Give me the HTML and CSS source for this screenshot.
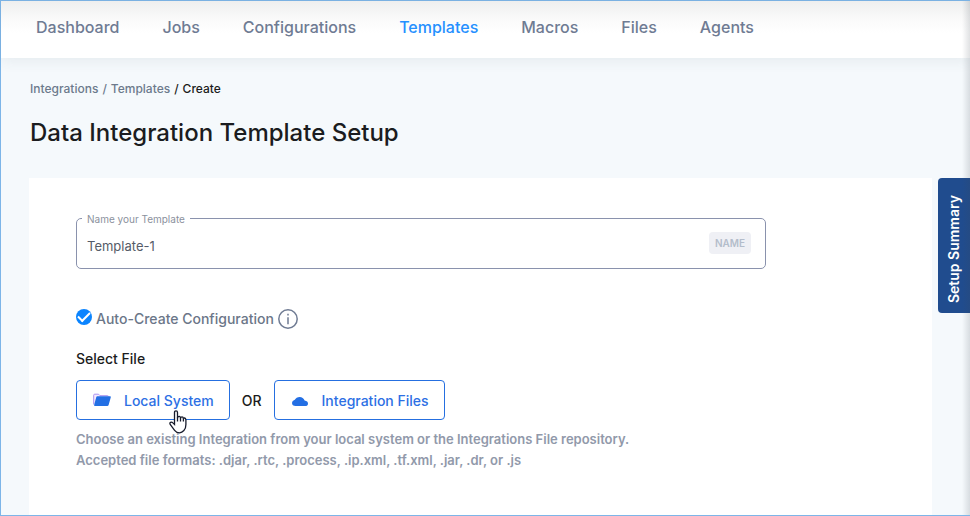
FILE: index.html
```html
<!DOCTYPE html>
<html lang="en">
<head>
<meta charset="utf-8">
<meta name="viewport" content="width=device-width, initial-scale=1">
<title>Data Integration Template Setup</title>
<link rel="stylesheet" href="styles.css">
</head>
<body>
<div class="page">
  <nav class="topnav" aria-label="Main">
    <a href="#">Dashboard</a>
    <a href="#">Jobs</a>
    <a href="#">Configurations</a>
    <a href="#" class="active">Templates</a>
    <a href="#">Macros</a>
    <a href="#">Files</a>
    <a href="#">Agents</a>
  </nav>
  <header class="heading">
    <div class="crumbs"><a href="#">Integrations</a><span class="slash">/</span><a href="#">Templates</a><span>/</span><span>Create</span></div>
    <h1>Data Integration Template Setup</h1>
  </header>
  <div class="content">
    <main class="card">
      <div class="field">
        <label for="name">Name your Template</label>
        <input id="name" type="text" value="Template-1">
        <span class="tag">NAME</span>
      </div>
      <div class="auto">
        <input id="auto" type="checkbox" checked>
        <label for="auto">Auto-Create Configuration</label>
        <svg class="info" viewBox="0 0 20 20" width="20" height="20" aria-hidden="true"><circle cx="10" cy="10" r="9.2"/><path d="M10 8.2v7M10 4.8v1.6"/></svg>
      </div>
      <h2>Select File</h2>
      <div class="sources">
        <button type="button" class="local">
          <svg viewBox="0 0 18 14" width="18" height="14" aria-hidden="true"><path class="back" d="M.7 11.500V2.200Q.7 1.200 1.700 1.200H5.500L7 2.700H14.500Q15.400 2.700 15.400 3.500"/><path class="front" d="M4.300 3.300H17.100Q18 3.300 17.800 4.200L15.700 11.800Q15.400 13 14.200 13H1.800Q.8 13 1.200 11.800L3.300 4.100Q3.500 3.300 4.300 3.300Z"/></svg>
          Local System
          <svg class="cursor" viewBox="0 0 18 24" width="18" height="24" aria-hidden="true"><path d="M5.500 14.500V2.500Q5.500.8 7 .8T8.500 2.500V8.200Q8.700 6.300 10.100 6.300T11.500 8.200Q11.800 6.900 13 6.900T14.400 8.800Q14.700 7.900 15.700 8T16.900 9.800V14.500Q16.900 18.500 14.900 20.500T10.500 22.800Q7.500 22.800 5.600 20.300L1.200 14.500Q.4 12.900 1.600 12.300T3.900 12.900Z"/><path d="M8.500 7.500V11.500M11.500 8V11.500M14.400 8.500V11.500"/></svg>
        </button>
        <span class="or">OR</span>
        <button type="button" class="remote">
          <svg viewBox="0 0 18 14" width="18" height="14" aria-hidden="true"><path class="front" d="M4.700 13Q1 13 1 9.800Q1 7.800 3.800 6.800Q5.200 3.900 8.700 3.900Q12.200 3.900 13.600 7.400Q17 8 17 10.400Q17 13 13.900 13Z"/></svg>
          Integration Files
        </button>
      </div>
      <p>Choose an existing Integration from your local system or the Integrations File repository.<br>Accepted file formats: .djar, .rtc, .process, .ip.xml, .tf.xml, .jar, .dr, or .js</p>
    </main>
    <button type="button" class="summary">Setup Summary</button>
  </div>
</div>
</body>
</html>
```
FILE: styles.css
```css
* { box-sizing: border-box; }
body {
  margin: 0;
  font-family: Inter, "Liberation Sans", sans-serif;
  font-size: 13px;
  font-weight: 500;
  color: #1b1c20;
}
a { color: inherit; text-decoration: none; }
.page {
  position: relative;
  display: flex;
  flex-direction: column;
  min-height: 100vh;
  border: 1px solid #7db5e8;
  border-right: 0;
  background: #f5f9fc;
}
.page::after {
  content: "";
  position: absolute;
  inset: 0 0 0 auto;
  width: 8px;
  background: linear-gradient(to right, rgba(60, 70, 80, 0), rgba(60, 70, 80, .16));
  pointer-events: none;
}
.topnav {
  display: flex;
  gap: 43px;
  padding: 14px 35px 18px;
  font-size: 16px;
  line-height: 25px;
  color: #6f7b93;
  background: linear-gradient(#eeefef, #fafafa 18px, #fff 32px);
  box-shadow: 0 2px 14px rgba(60, 80, 90, .09);
}
.topnav .active { color: #2590ff; }
.heading { padding: 22px 29px 29px; }
.crumbs {
  display: flex;
  gap: 4px;
  font-size: 12px;
  line-height: 18px;
}
.crumbs a, .slash { color: #6c7a8c; }
h1 {
  margin: 19px 0 0;
  font-size: 24px;
  font-weight: 500;
  line-height: 32px;
}
.content {
  display: flex;
  flex: 1;
  align-items: flex-start;
  gap: 6px;
  padding-left: 28px;
}
.card {
  flex: 1;
  align-self: stretch;
  padding: 40px 47px;
  background: #fff;
}
.field {
  position: relative;
  display: flex;
  align-items: center;
  width: 85.300%;
  height: 51px;
  padding: 0 14px 2px 10px;
  border: 1px solid #8a92ad;
  border-radius: 5px;
}
.field label {
  position: absolute;
  top: -7px;
  left: 5px;
  padding: 0 5px;
  font-size: 10px;
  font-weight: 400;
  line-height: 14px;
  color: #8b919d;
  background: #fff;
}
.field input {
  flex: 1;
  min-width: 0;
  padding: 7px 0 0;
  border: 0;
  outline: 0;
  font: 400 13px/20px Inter, "Liberation Sans", sans-serif;
  color: #555c68;
  background: none;
}
.tag {
  padding: 0 6px;
  border-radius: 4px;
  font-size: 10px;
  font-weight: 600;
  line-height: 22px;
  color: #b4bdcb;
  background: #eff0f5;
}
.auto {
  display: flex;
  align-items: center;
  gap: 4px;
  margin-top: 39px;
  font-size: 14px;
  line-height: 22px;
  color: #6b7688;
}
.auto input {
  appearance: none;
  display: grid;
  place-items: center;
  width: 16px;
  height: 16px;
  margin: 0 0 4px;
  border-radius: 50%;
  background: #0a84ff;
}
.auto input::after {
  content: "";
  width: 10px;
  height: 5px;
  margin-bottom: 3px;
  border: solid #fff;
  border-width: 0 0 2px 2px;
  transform: rotate(-45deg);
}
.info { fill: none; stroke: #6f7b93; stroke-width: 1.500; }
h2 {
  margin: 19px 0 11px;
  font-size: 14px;
  font-weight: 500;
  line-height: 20px;
}
.sources {
  display: flex;
  align-items: center;
  gap: 12px;
  font-size: 14px;
}
.sources button {
  position: relative;
  display: flex;
  align-items: center;
  gap: 13px;
  height: 40px;
  padding: 0 15px 0 16px;
  border: 1px solid #256fe0;
  border-radius: 4px;
  font: inherit;
  color: #2d6fe4;
  background: #fff;
}
.front { fill: #236fe4; }
.back { fill: #f6eaff; stroke: #a992ee; }
.sources .cursor {
  position: absolute;
  top: 29px;
  left: 92px;
  fill: #fff;
  stroke: #171b2b;
  stroke-width: 1.300;
}
p {
  margin: 9px 0 0;
  font-weight: 600;
  line-height: 21px;
  color: #9199aa;
}
.summary {
  width: 32px;
  height: 135px;
  padding: 8px 0 0;
  border: 0;
  border-radius: 4px 0 0 4px;
  font: 600 14px/32px Inter, "Liberation Sans", sans-serif;
  color: #fff;
  background: #204c8e;
  writing-mode: sideways-lr;
}
```
